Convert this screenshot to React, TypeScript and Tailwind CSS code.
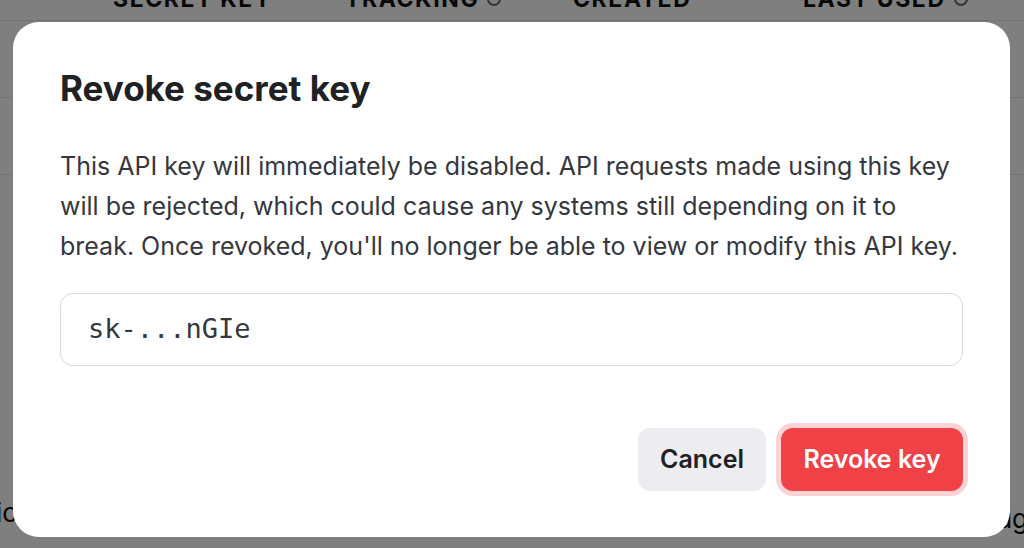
const columns = [
  { label: "Secret key", info: false, className: "w-[345px] pl-[113px]" },
  { label: "Tracking", info: true, className: "w-[228px]" },
  { label: "Created", info: false, className: "w-[230px]" },
  { label: "Last used", info: true, className: "" },
];

const InfoDot = () => (
  <span className="ml-2 inline-block h-[14px] w-[14px] rounded-full border-2 border-[#6b6b6b]" />
);

const KeysTable = () => {
  return (
    <div className="h-full w-full bg-white font-['Inter',sans-serif] text-[#0d0d0d]">
      <div className="-mt-[22px] flex h-[43px] items-center border-b border-[#e5e5e5] text-[23px] font-bold whitespace-nowrap uppercase tracking-[0.07em]">
        {columns.map((col) => (
          <div key={col.label} className={`flex shrink-0 items-center ${col.className}`}>
            {col.label}
            {col.info && <InfoDot />}
          </div>
        ))}
      </div>
      <div className="h-[77px] border-b border-[#e5e5e5]" />
      <div className="h-[77px] border-b border-[#e5e5e5]" />
      <div className="flex justify-between pt-[318px] text-[26px]">
        <span className="-ml-[4px]">ic</span>
        <span className="mr-[-4px] pt-[6px]">ug</span>
      </div>
    </div>
  );
};

const RevokeDialog = () => {
  return (
    <div className="flex h-[515px] w-[997px] flex-col rounded-[26px] bg-white px-[47px] pt-[46px] pb-[46px] font-['Inter',sans-serif]">
      <h2 className="text-[35px] leading-[40px] font-bold text-[#202123]">
        Revoke secret key
      </h2>
      <p className="mt-[38px] text-[25px] leading-[40px] text-[#353740]">
        This API key will immediately be disabled. API requests made using this key
        <br />
        will be rejected, which could cause any systems still depending on it to
        <br />
        break. Once revoked, you'll no longer be able to view or modify this API key.
      </p>
      <div className="mt-[27px] flex h-[73px] items-center rounded-[13px] border border-[#d9d9e3] px-[27px] font-['DejaVu_Sans_Mono',monospace] text-[27px] text-[#353740]">
        sk-...nGIe
      </div>
      <div className="mt-auto flex justify-end gap-[15px]">
        <button className="h-[63px] w-[128px] rounded-[12px] bg-[#ececf1] text-[25px] font-semibold text-[#202123]">
          Cancel
        </button>
        <button className="h-[63px] w-[182px] rounded-[12px] bg-[#ef4146] text-[25px] font-semibold text-white ring-[5px] ring-[#fcd3d4]">
          Revoke key
        </button>
      </div>
    </div>
  );
};

export default function App() {
  return (
    <div className="relative h-[548px] w-[1024px] overflow-hidden">
      <KeysTable />
      <div className="absolute inset-0 bg-black/50 pt-[22px] pl-[13px]">
        <RevokeDialog />
      </div>
    </div>
  );
}
